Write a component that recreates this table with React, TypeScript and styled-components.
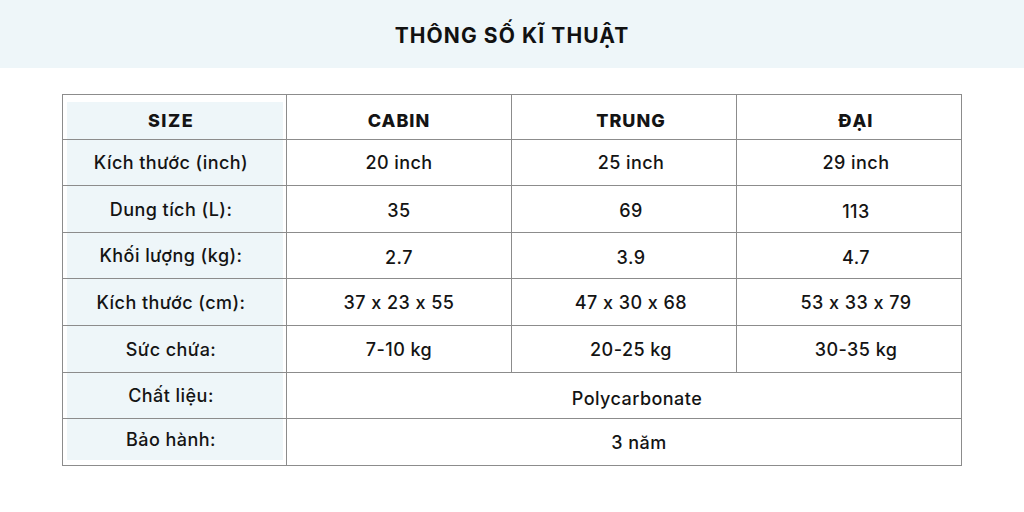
import React, { FC } from "react";
import styled, { createGlobalStyle } from "styled-components";

const GlobalStyle = createGlobalStyle`
  body {
    margin: 0;
    background: #ffffff;
    font-family: Inter, "Noto Sans", sans-serif;
    font-feature-settings: "calt" 0;
    color: #141414;
  }
`;

const Page = styled.div`
  width: 1024px;
  height: 512px;
  display: flex;
  flex-direction: column;
`;

// Title band
const TitleBand = styled.header`
  height: 68px;
  box-sizing: border-box;
  padding-top: 3px;
  background: #eef6f9;
  display: flex;
  align-items: center;
  justify-content: center;
`;

const Title = styled.h1`
  margin: 0;
  font-size: 21px;
  font-weight: 700;
  letter-spacing: 1.1px;
  color: #111;
`;

// Spec table
const SpecGrid = styled.div`
  margin: 26px 0 0 62px;
  width: 900px;
  box-sizing: border-box;
  display: grid;
  grid-template-columns: 224px 225px 225px 225px;
  grid-template-rows: 45px 46px 47px 46px 47px 47px 46px 47px;
  border-left: 1px solid #8c8c8c;
  border-top: 1px solid #8c8c8c;
`;

const LabelCell = styled.div<{ $top: number; $bottom: number }>`
  box-sizing: border-box;
  border-right: 1px solid #8c8c8c;
  border-bottom: 1px solid #8c8c8c;
  padding: ${(p) => p.$top}px 3px ${(p) => p.$bottom}px 4px;
  display: flex;
`;

const LabelFill = styled.div<{ $bold?: boolean }>`
  flex: 1;
  background: #eef6f9;
  display: flex;
  align-items: center;
  justify-content: center;
  padding-right: 8px;
  font-size: 18px;
  font-weight: ${(p) => (p.$bold ? 800 : 500)};
  letter-spacing: ${(p) => (p.$bold ? "1.5px" : "0.45px")};
`;

const ValueCell = styled.div<{ $span?: number; $shift?: number; $top?: number; $bold?: boolean }>`
  box-sizing: border-box;
  border-right: 1px solid #8c8c8c;
  border-bottom: 1px solid #8c8c8c;
  grid-column: span ${(p) => p.$span ?? 1};
  display: flex;
  align-items: center;
  justify-content: center;
  padding-left: ${(p) => p.$shift ?? 0}px;
  padding-top: ${(p) => p.$top ?? 0}px;
  font-size: 18px;
  font-weight: ${(p) => (p.$bold ? 800 : 500)};
  letter-spacing: ${(p) => (p.$bold ? "1px" : "0.45px")};
`;

interface Row {
  label: string;
  values: string[];
  tops?: number[];
}

const rows: Row[] = [
  { label: "Kích thước (inch)", values: ["20 inch", "25 inch", "29 inch"], tops: [0, 0, 0] },
  { label: "Dung tích (L):", values: ["35", "69", "113"], tops: [3, 3, 5] },
  { label: "Khối lượng (kg):", values: ["2.7", "3.9", "4.7"], tops: [4, 4, 4] },
  { label: "Kích thước (cm):", values: ["37 x 23 x 55", "47 x 30 x 68", "53 x 33 x 79"], tops: [0, 0, 0] },
  { label: "Sức chứa:", values: ["7-10 kg", "20-25 kg", "30-35 kg"], tops: [-5, 1, 1] },
];

const shifts = [0, 14, 14];

const App: FC = () => {
  return (
    <Page>
      <GlobalStyle />
      <TitleBand>
        <Title>THÔNG SỐ KĨ THUẬT</Title>
      </TitleBand>
      <SpecGrid>
        <LabelCell $top={7} $bottom={0}>
          <LabelFill $bold>SIZE</LabelFill>
        </LabelCell>
        <ValueCell $bold $top={6}>CABIN</ValueCell>
        <ValueCell $bold $top={6} $shift={14}>TRUNG</ValueCell>
        <ValueCell $bold $top={6} $shift={14}>ĐẠI</ValueCell>

        {rows.map((row) => (
          <React.Fragment key={row.label}>
            <LabelCell $top={0} $bottom={0}>
              <LabelFill>{row.label}</LabelFill>
            </LabelCell>
            {row.values.map((v, i) => (
              <ValueCell key={v} $shift={shifts[i]} $top={row.tops?.[i]}>
                {v}
              </ValueCell>
            ))}
          </React.Fragment>
        ))}

        <LabelCell $top={0} $bottom={0}>
          <LabelFill>Chất liệu:</LabelFill>
        </LabelCell>
        <ValueCell $span={3} $shift={26} $top={5}>Polycarbonate</ValueCell>

        <LabelCell $top={0} $bottom={5}>
          <LabelFill>Bảo hành:</LabelFill>
        </LabelCell>
        <ValueCell $span={3} $shift={30}>3 năm</ValueCell>
      </SpecGrid>
    </Page>
  );
};

export default App;
